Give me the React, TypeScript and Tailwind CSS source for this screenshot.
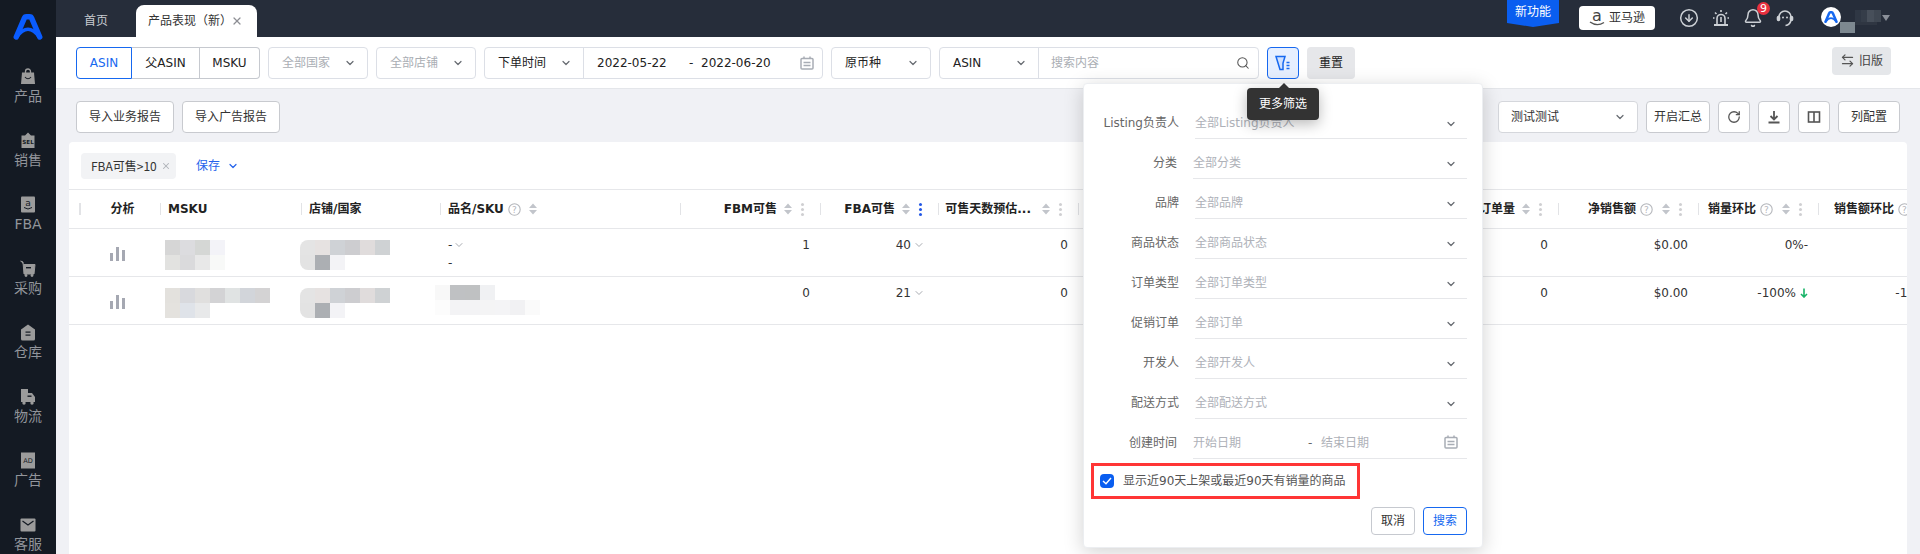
import React from "react";
import { ChevronDown, Search, X, ArrowLeftRight, RotateCw, CircleArrowDown, Bell } from "lucide-react";

const Logo = ({ size = 28, color = "#0a5cff" }: { size?: number; color?: string }) => (
  <svg width={size} height={size * 0.86} viewBox="0 0 28 24" fill="none">
    <path d="M3 21.5 L10.5 4 Q11 2.5 12.5 2.5 H15.5 Q17 2.5 17.5 4 L25 21.5" stroke={color} strokeWidth="5" strokeLinecap="round" strokeLinejoin="round" />
    <path d="M3.5 21.5 Q14 7 24.5 21.5" stroke={color} strokeWidth="3.2" strokeLinecap="round" />
  </svg>
);

const G = "#9b9b9b";
const D = "#141a23";
const SideIcons: Record<string, React.ReactNode> = {
  产品: (
    <svg width="16" height="17" viewBox="0 0 16 17">
      <path d="M5.5 5 V3.5 a2.5 2.5 0 0 1 5 0 V5" fill="none" stroke={G} strokeWidth="1.3" />
      <path d="M2 4.5 H14 L15 16 H1 Z" fill={G} />
      <path d="M5 9 Q8 12.5 11 9" fill="none" stroke={D} strokeWidth="1.1" />
    </svg>
  ),
  销售: (
    <svg width="16" height="17" viewBox="0 0 16 17">
      <path d="M8 0.5 L11 3.5 H14.5 V16 H1.5 V3.5 H5 Z" fill={G} />
      <text x="8" y="11.5" textAnchor="middle" fontSize="5.6" fontWeight="700" fill={D} fontFamily="DejaVu Sans">SEL</text>
    </svg>
  ),
  FBA: (
    <svg width="16" height="17" viewBox="0 0 16 17">
      <rect x="1" y="0.5" width="14" height="16" rx="1" fill={G} />
      <text x="8" y="10" textAnchor="middle" fontSize="9" fill={D} fontFamily="DejaVu Sans">a</text>
      <path d="M4 11.5 Q8 14.5 12 11.5" fill="none" stroke={D} strokeWidth="1" />
    </svg>
  ),
  采购: (
    <svg width="16" height="17" viewBox="0 0 16 17">
      <path d="M0.5 1 L3 2 L4 14 H14 L15 4.5 H3.5" fill={G} stroke={G} strokeWidth="1" />
      <rect x="6" y="7" width="5" height="1.4" fill={D} />
      <circle cx="6" cy="15.5" r="1.4" fill={G} />
      <circle cx="12" cy="15.5" r="1.4" fill={G} />
    </svg>
  ),
  仓库: (
    <svg width="16" height="17" viewBox="0 0 16 17">
      <path d="M8 0.5 L15 5.5 V15 Q15 16.5 13.5 16.5 H2.5 Q1 16.5 1 15 V5.5 Z" fill={G} />
      <rect x="5.5" y="7.5" width="5" height="1.2" fill={D} />
      <rect x="5.5" y="10.5" width="5" height="1.2" fill={D} />
    </svg>
  ),
  物流: (
    <svg width="16" height="17" viewBox="0 0 16 17">
      <path d="M1 1 H8 V5 H12 L15 9 V14 H1 Z" fill={G} />
      <rect x="7.5" y="7.5" width="4" height="1.4" fill={D} />
      <circle cx="4" cy="15" r="1.7" fill={G} />
      <circle cx="12" cy="15" r="1.7" fill={G} />
    </svg>
  ),
  广告: (
    <svg width="16" height="17" viewBox="0 0 16 17">
      <rect x="1" y="0.5" width="14" height="16" fill={G} />
      <text x="8" y="11" textAnchor="middle" fontSize="6.6" fill={D} fontFamily="DejaVu Sans">AD</text>
    </svg>
  ),
  客服: (
    <svg width="16" height="14" viewBox="0 0 16 14">
      <rect x="0.5" y="0.5" width="15" height="13" rx="1" fill={G} />
      <path d="M2.5 3 L8 7 L13.5 3" fill="none" stroke={D} strokeWidth="1.2" />
    </svg>
  ),
};

const Sidebar = () => (
  <div className="w-14 h-full shrink-0 bg-[#141a23] flex flex-col items-center text-sm text-[#92959b]">
    <div className="h-[68px] w-full flex justify-center pt-[14px] shrink-0">
      <Logo size={30} />
    </div>
    {["产品", "销售", "FBA", "采购", "仓库", "物流", "广告", "客服"].map((n) => (
      <div key={n} className="h-16 w-full shrink-0 flex flex-col items-center">
        <div className="h-[17px] flex items-center">{SideIcons[n]}</div>
        <div className="leading-5 mt-[1px]">{n}</div>
      </div>
    ))}
  </div>
);

const Mosaic = ({ rows }: { rows: string[][] }) => (
  <div className="flex flex-col">
    {rows.map((r, i) => (
      <div key={i} className="flex">
        {r.map((c, j) => (
          <div key={j} className={`w-[15px] h-[15px] ${c}`} />
        ))}
      </div>
    ))}
  </div>
);

const TopBar = () => (
  <div className="h-[37px] shrink-0 bg-[#262d3a] flex items-start text-xs">
    <div className="flex items-end h-[37px]">
      <div className="w-20 pl-7 h-[32px] flex items-center text-[#c9ccd1]">首页</div>
      <div className="w-[121px] h-[32px] bg-white rounded-t-lg flex items-center pl-3 text-[#333]">
        产品表现（新）
        <X size={12} strokeWidth={2.5} className="text-[#8d8f94] -ml-[1px]" />
      </div>
    </div>
    <div className="ml-auto flex items-start pr-[30px]">
      <div className="w-[52px] h-[27px] bg-[#0a5ef0] text-white flex items-center justify-center pb-[4px] [clip-path:polygon(0_0,100%_0,100%_85%,50%_100%,0_85%)]">
        新功能
      </div>
      <div className="ml-5 mt-[6px] w-[76px] h-6 bg-white rounded flex items-center justify-center gap-1 text-[#333]">
        <svg width="16" height="20" viewBox="0 0 16 20" fill="none">
          <text x="8" y="13" textAnchor="middle" fontSize="16" fill="#444" fontFamily="DejaVu Sans">a</text>
          <path d="M1 14 Q8 19 15 14.5" stroke="#555" strokeWidth="1.4" />
        </svg>
        亚马逊
      </div>
      <div className="ml-[18px] flex text-[#ccd0d5]">
        <div className="w-8 h-[36px] flex items-center justify-center">
          <CircleArrowDown size={20} strokeWidth={1.8} />
        </div>
        <div className="w-8 h-[36px] flex items-center justify-center">
          <svg width="18" height="18" viewBox="0 0 18 18" fill="none" stroke="currentColor" strokeWidth="1.6">
            <path d="M5 15.5 V9.5 a4 4 0 0 1 8 0 V15.5" />
            <path d="M2 16 H16" strokeWidth="2" />
            <path d="M9 1 V3 M3 3.5 L4.5 5 M15 3.5 L13.5 5 M1 9 H2.5 M17 9 H15.5 M9 8 V13" />
          </svg>
        </div>
        <div className="w-8 h-[36px] flex items-center justify-center relative">
          <Bell size={20} strokeWidth={1.8} />
          <div className="absolute left-[20px] top-[2px] w-[13px] h-[13px] rounded-full bg-[#e8303f] text-white text-[11px] leading-[13px] text-center">9</div>
        </div>
        <div className="w-8 h-[36px] flex items-center justify-center">
          <svg width="18" height="18" viewBox="0 0 18 18" fill="none" stroke="currentColor" strokeWidth="1.6">
            <path d="M3 10 V8 a6 6 0 0 1 12 0 V10" />
            <rect x="1.5" y="7.5" width="2" height="4" rx="1" fill="currentColor" />
            <rect x="14.5" y="7.5" width="2" height="4" rx="1" fill="currentColor" />
            <path d="M15 11 Q14 16 9.5 16.5" />
            <circle cx="7" cy="8.5" r="1" fill="currentColor" stroke="none" />
            <circle cx="11" cy="8.5" r="1" fill="currentColor" stroke="none" />
          </svg>
        </div>
      </div>
      <div className="ml-5 mt-[7px] w-5 h-5 rounded-full bg-white flex items-center justify-center shrink-0">
        <Logo size={14} color="#1668f0" />
      </div>
      <div className="mt-[10px] -ml-[6px] flex flex-col relative">
        <div className="flex pl-[20px]">
          <div className="w-[6px] h-3 bg-[#2f3744]" />
          <div className="w-[6px] h-3 bg-[#353d49]" />
          <div className="w-[7px] h-3 bg-[#474f5a]" />
          <div className="w-[7px] h-3 bg-[#3f4752]" />
        </div>
        <div className="flex">
          <div className="w-[5px] h-[11px] bg-transparent" />
          <div className="w-[15px] h-[11px] bg-[#7d8890]" />
          <div className="w-[22px] h-[3px] bg-[#2f3642]" />
        </div>
      </div>
      <div className="ml-[1px] mt-[15px] w-0 h-0 border-x-[4px] border-x-transparent border-t-[6px] border-t-[#8a8f98]" />
    </div>
  </div>
);

const Sel = ({ w, text, ph }: { w: string; text: string; ph?: boolean }) => (
  <div className={`${w} h-8 shrink-0 flex items-center justify-between pl-[13px] pr-[11px] bg-white border border-[#dcdfe6] rounded ${ph ? "text-[#aaaeb4]" : "text-[#222]"}`}>
    <span>{text}</span>
    <ChevronDown size={12} strokeWidth={2.4} className="text-[#666a70]" />
  </div>
);

const Calendar = () => (
  <svg width="14" height="14" viewBox="0 0 14 14" fill="none" stroke="#a8adb5" strokeWidth="1.5">
    <rect x="1" y="2.5" width="12" height="10.5" rx="1" />
    <path d="M4 0.5 V3 M10 0.5 V3 M3.5 6.5 H10.5 M3.5 9.5 H10.5" />
  </svg>
);

const FilterIcon = () => (
  <svg width="16" height="16" viewBox="0 0 16 16" fill="none" stroke="#1668f0" strokeWidth="1.5">
    <path d="M1 1.5 H10 L8 8 V14.5 H5 L3 8 Z" fill="#cfe0ff" />
    <path d="M11.5 7.5 H14.5 M11.5 10.5 H14.5 M11.5 13.5 H14.5" strokeWidth="1.6" />
  </svg>
);

const Toolbar = () => (
  <div className="h-[52px] shrink-0 bg-white border-b border-[#e4e6ea] flex items-center px-5 gap-2 text-xs text-[#222]">
    <div className="flex h-8 shrink-0">
      <div className="w-14 border border-[#1668f0] rounded-l flex items-center justify-center text-[#1668f0]">ASIN</div>
      <div className="w-[68px] border-y border-r border-[#c6c9cf] flex items-center justify-center">父ASIN</div>
      <div className="w-[60px] border-y border-r border-[#c6c9cf] rounded-r flex items-center justify-center">MSKU</div>
    </div>
    <Sel w="w-[100px]" text="全部国家" ph />
    <Sel w="w-[100px]" text="全部店铺" ph />
    <div className="flex h-8 w-[339px] shrink-0 border border-[#dcdfe6] rounded overflow-hidden">
      <div className="w-[99px] flex items-center justify-between pl-[13px] pr-[11px] border-r border-[#dcdfe6]">
        <span>下单时间</span>
        <ChevronDown size={12} strokeWidth={2.4} className="text-[#666a70]" />
      </div>
      <div className="flex-1 flex items-center pl-[13px] pr-2">
        <span className="w-[92px]">2022-05-22</span>
        <span className="w-3">-</span>
        <span>2022-06-20</span>
        <span className="ml-auto"><Calendar /></span>
      </div>
    </div>
    <Sel w="w-[100px]" text="原币种" />
    <div className="flex h-8 w-[320px] shrink-0 border border-[#dcdfe6] rounded overflow-hidden">
      <div className="w-[99px] flex items-center justify-between pl-[13px] pr-[11px] border-r border-[#dcdfe6]">
        <span>ASIN</span>
        <ChevronDown size={12} strokeWidth={2.4} className="text-[#666a70]" />
      </div>
      <div className="flex-1 flex items-center justify-between pl-3 pr-2 text-[#aaaeb4]">
        <span>搜索内容</span>
        <Search size={14} strokeWidth={1.8} className="text-[#555]" />
      </div>
    </div>
    <div className="w-8 h-8 shrink-0 rounded border border-[#1668f0] bg-[#e6efff] flex items-center justify-center">
      <FilterIcon />
    </div>
    <div className="w-12 h-8 shrink-0 rounded bg-[#e6e7ea] flex items-center justify-center">重置</div>
    <div className="ml-auto mr-[9px] -mt-1 w-[59px] h-7 shrink-0 rounded bg-[#e5e7ea] flex items-center justify-center gap-1 text-[#444]">
      <ArrowLeftRight size={15} strokeWidth={2} className="text-[#555]" />
      旧版
    </div>
  </div>
);

const Btn = ({ w, children }: { w: string; children: React.ReactNode }) => (
  <div className={`${w} h-8 shrink-0 rounded border border-[#c8cacf] bg-white flex items-center justify-center text-[#333]`}>{children}</div>
);

const ActionRow = () => (
  <div className="flex items-center px-5 pt-3 text-xs">
    <div className="flex gap-2">
      <Btn w="w-[98px]">导入业务报告</Btn>
      <Btn w="w-[98px]">导入广告报告</Btn>
    </div>
    <div className="ml-auto flex gap-2">
      <div className="w-[140px] h-8 rounded border border-[#d5d7dc] bg-white flex items-center justify-between pl-3 pr-[11px] text-[#333]">
        <span>测试测试</span>
        <ChevronDown size={12} strokeWidth={2.4} className="text-[#666a70]" />
      </div>
      <Btn w="w-16">开启汇总</Btn>
      <Btn w="w-8"><RotateCw size={14} strokeWidth={2.2} className="text-[#555]" /></Btn>
      <Btn w="w-8">
        <svg width="14" height="14" viewBox="0 0 14 14" fill="none" stroke="#555" strokeWidth="1.8">
          <path d="M7 1 V9 M3.5 6 L7 9.5 L10.5 6" />
          <path d="M1.5 12.5 H12.5" strokeWidth="2" />
        </svg>
      </Btn>
      <Btn w="w-8">
        <svg width="14" height="14" viewBox="0 0 14 14" fill="none" stroke="#555" strokeWidth="1.6">
          <rect x="1.5" y="2" width="11" height="10" />
          <path d="M7 2 V12" />
        </svg>
      </Btn>
      <Btn w="w-[62px]">列配置</Btn>
    </div>
  </div>
);

const Sort = () => (
  <svg width="8" height="12" viewBox="0 0 8 12" className="shrink-0">
    <path d="M4 0.5 L8 5 H0 Z M4 11.5 L8 7 H0 Z" fill="#c2c5cb" />
  </svg>
);

const Dots = ({ blue }: { blue?: boolean }) => (
  <div className={`w-1 flex flex-col gap-[2px] shrink-0 ${blue ? "text-[#2458e6]" : "text-[#cfcfd2]"}`}>
    {[0, 1, 2].map((i) => (
      <div key={i} className="w-[3px] h-[3px] rounded-full bg-current mx-auto" />
    ))}
  </div>
);

const Help = () => (
  <svg width="13" height="13" viewBox="0 0 13 13" fill="none" className="shrink-0" stroke="#b5b7bc">
    <circle cx="6.5" cy="6.5" r="5.7" strokeWidth="1.1" />
    <text x="6.5" y="9.7" textAnchor="middle" fontSize="9" fill="#b5b7bc" stroke="none" fontWeight="400" fontFamily="DejaVu Sans">?</text>
  </svg>
);

const GRID = "grid grid-cols-[11px_80px_141px_139px_240px_140px_118px_140px_480px_140px_120px_138px] w-[1976px]";

const HCell = ({ children, right, center, pl }: { children: React.ReactNode; right?: boolean; center?: boolean; pl?: boolean }) => (
  <div className="flex items-center">
    <div className={`h-3 w-full border-l border-[#e2e3e6] flex items-center whitespace-nowrap ${right ? "justify-end pr-4" : ""} ${center ? "justify-center pl-1" : ""} ${pl ? "pl-[7px]" : ""}`}>
      {children}
    </div>
  </div>
);

const SortDots = ({ blue, help }: { blue?: boolean; help?: boolean }) => (
  <>
    {help && <span className="ml-1"><Help /></span>}
    <span className={`${help ? "ml-[9px]" : "ml-[7px]"} flex`}><Sort /></span>
    <span className="ml-2 flex"><Dots blue={blue} /></span>
  </>
);

const Bars = () => (
  <svg width="15" height="14" viewBox="0 0 15 14" fill="#a5a8b2">
    <rect x="0" y="6" width="3" height="8" />
    <rect x="6" y="0" width="3" height="14" />
    <rect x="12" y="3" width="3" height="11" />
  </svg>
);

const Store = () => (
  <div className="-ml-[1px] rounded-l-lg overflow-hidden w-fit">
    <Mosaic
      rows={[
        ["bg-[#e4e4e4]", "bg-[#e6e2e1]", "bg-[#cfd2d6]", "bg-[#cdcdd0]", "bg-[#e0dcdc]", "bg-[#cfd2d4]"],
        ["bg-[#e3e3e3]", "bg-[#acafb3]", "bg-[#f3f3f6]"],
      ]}
    />
  </div>
);

const Num = ({ children, pr = "pr-[10px]" }: { children?: React.ReactNode; pr?: string }) => (
  <div className={`flex justify-end items-center h-4 mt-2 whitespace-nowrap ${pr}`}>{children}</div>
);

const DownArrow = () => (
  <svg width="8" height="10" viewBox="0 0 8 10" fill="none" stroke="#18b368" strokeWidth="1.6" className="ml-[4px]">
    <path d="M4 0.5 V9 M1 6 L4 9 L7 6" />
  </svg>
);

const Row = ({ msku, name, fbm, fba, pct, last }: { msku: React.ReactNode; name: React.ReactNode; fbm: string; fba: string; pct: React.ReactNode; last?: React.ReactNode }) => (
  <div className={`${GRID} h-12 border-b border-[#e6e7ea] text-[#333] text-xs`}>
    <div />
    <div className="pl-[30px] pt-[18px]"><Bars /></div>
    <div className="pl-[5px] pt-[11px]">{msku}</div>
    <div className="pt-[11px]"><Store /></div>
    <div>{name}</div>
    <Num>{fbm}</Num>
    <Num pr="pr-[13px]">
      {fba}
      <ChevronDown size={12} strokeWidth={2} className="text-[#a8abb1] ml-[2px]" />
    </Num>
    <Num>0</Num>
    <Num>0</Num>
    <Num>$0.00</Num>
    <Num>{pct}</Num>
    <Num>{last}</Num>
  </div>
);

const Card = () => (
  <div className="mx-[13px] mt-[9px] flex-1 bg-white rounded-t overflow-hidden text-xs">
    <div className="h-12 border-b border-[#e6e7ea] flex items-center pl-3">
      <div className="w-[95px] h-[26px] bg-[#f2f3f5] rounded-sm flex items-center pl-[10px] text-[#333] whitespace-nowrap [font-family:'Noto_Sans_CJK_SC',sans-serif]">
        FBA可售&gt;10
        <X size={10} strokeWidth={2.5} className="text-[#b0b3b9] ml-[4px]" />
      </div>
      <div className="ml-5 text-[#2563eb] flex items-center gap-[7px]">
        保存
        <ChevronDown size={12} strokeWidth={2.4} />
      </div>
    </div>
    <div className={`${GRID} h-[39px] border-b border-[#e6e7ea] font-bold text-[#222]`}>
      <div className="flex items-center justify-end"><div className="h-3 border-r border-[#e2e3e6]" /></div>
      <HCell center>分析</HCell>
      <HCell pl>MSKU</HCell>
      <HCell pl>店铺/国家</HCell>
      <HCell pl>品名/SKU<span className="ml-1"><Help /></span><span className="ml-2 flex"><Sort /></span></HCell>
      <HCell right>FBM可售<SortDots /></HCell>
      <HCell right>FBA可售<SortDots blue /></HCell>
      <HCell right><span className="mr-1">可售天数预估...</span><SortDots /></HCell>
      <HCell right>订单量<SortDots /></HCell>
      <HCell right>净销售额<SortDots help /></HCell>
      <HCell right>销量环比<SortDots help /></HCell>
      <HCell right>销售额环比<SortDots help /></HCell>
    </div>
    <Row
      msku={<Mosaic rows={[["bg-[#d6d6d6]", "bg-[#dcdcdf]", "bg-[#d5d7d5]", "bg-[#f3f3f8]"], ["bg-[#e2e2e0]", "bg-[#dadadc]", "bg-[#e8e8e8]", "bg-[#f8f9f8]"]]} />}
      name={
        <div className="pl-2">
          <div className="h-4 mt-2 flex items-center">- <ChevronDown size={12} strokeWidth={2} className="text-[#a8abb1] ml-[1px]" /></div>
          <div className="mt-[2px] leading-4">-</div>
        </div>
      }
      fbm="1"
      fba="40"
      pct="0%-"
    />
    <Row
      msku={<Mosaic rows={[["bg-[#e3e1dd]", "bg-[#d8d9dd]", "bg-[#e0dfde]", "bg-[#d3d3d5]", "bg-[#e0e3e3]", "bg-[#d2d5da]", "bg-[#d4d3d4]"], ["bg-[#e4e2de]", "bg-[#dfe3e9]", "bg-[#e8e9ea]"]]} />}
      name={
        <div className="-ml-[5px] pt-[8px]">
          <Mosaic rows={[["bg-[#f8f8f8]", "bg-[#bfc1c3]", "bg-[#bfc1c2]", "bg-[#f0f1f3]"], ["bg-[#fcfcfc]", "bg-[#f3f3f5]", "bg-[#f3f3f5]", "bg-[#f4f4f5]", "bg-[#f4f4f6]", "bg-[#f1f1f3]", "bg-[#fafafa]"]]} />
        </div>
      }
      fbm="0"
      fba="21"
      pct={<>-100%<DownArrow /></>}
      last={<>-100%<DownArrow /></>}
    />
  </div>
);

const FRow = ({ label, ph, tight }: { label: string; ph: string; tight?: boolean }) => (
  <div className="flex h-10">
    <div className={`${tight ? "w-[93px]" : "w-[95px]"} text-right pt-4 leading-4 text-[#666] shrink-0`}>{label}</div>
    <div className="ml-4 flex-1 border-b border-[#e6e7ea] flex justify-between pt-4 pr-[10px] text-[#aeb1b8]">
      <span className="leading-4">{ph}</span>
      <ChevronDown size={12} strokeWidth={2.4} className="text-[#666a70] mt-[3px]" />
    </div>
  </div>
);

const FilterPanel = () => (
  <div className="absolute left-[1083px] top-[83px] w-[400px] h-[465px] bg-white rounded border border-[#eceef1] shadow-[0_4px_20px_rgba(0,0,0,0.18)] text-xs pt-[15px] pr-[15px]">
    <FRow label="Listing负责人" ph="全部Listing负责人" />
    <FRow label="分类" ph="全部分类" tight />
    <FRow label="品牌" ph="全部品牌" />
    <FRow label="商品状态" ph="全部商品状态" />
    <FRow label="订单类型" ph="全部订单类型" />
    <FRow label="促销订单" ph="全部订单" />
    <FRow label="开发人" ph="全部开发人" />
    <FRow label="配送方式" ph="全部配送方式" />
    <div className="flex h-10">
      <div className="w-[93px] text-right pt-4 leading-4 text-[#666] shrink-0">创建时间</div>
      <div className="ml-4 flex-1 border-b border-[#e6e7ea] flex pt-4 pr-[9px] leading-4 text-[#aeb1b8]">
        <span className="w-[115px]">开始日期</span>
        <span className="w-[13px] text-[#666]">-</span>
        <span>结束日期</span>
        <span className="ml-auto"><Calendar /></span>
      </div>
    </div>
    <div className="ml-[7px] mt-1 w-[269px] h-9 border-[3px] border-[#ff3535] flex items-center pl-[6px] text-[#555]">
      <div className="w-[14px] h-[14px] rounded-sm bg-[#0a5ef0] flex items-center justify-center shrink-0">
        <svg width="10" height="8" viewBox="0 0 10 8" fill="none" stroke="white" strokeWidth="1.4"><path d="M1 4 L4 6.8 L9 1" /></svg>
      </div>
      <span className="ml-[9px] whitespace-nowrap">显示近90天上架或最近90天有销量的商品</span>
    </div>
    <div className="flex justify-end gap-2 mt-2">
      <div className="w-11 h-7 rounded border border-[#c6c9cf] flex items-center justify-center text-[#333]">取消</div>
      <div className="w-11 h-7 rounded border border-[#1668f0] flex items-center justify-center text-[#1668f0]">搜索</div>
    </div>
  </div>
);

const Tooltip = () => (
  <div className="absolute left-[1247px] top-[88px] w-[72px] h-8 rounded bg-[#333] text-white text-xs flex items-center justify-center shadow-[0_4px_14px_rgba(0,0,0,0.28)]">
    <div className="absolute -top-[5px] left-[32px] w-0 h-0 border-x-[5px] border-x-transparent border-b-[5px] border-b-[#333]" />
    更多筛选
  </div>
);

export default function App() {
  return (
    <div className="relative w-[1920px] h-[554px] overflow-hidden flex bg-[#f0f1f5] [font-family:'DejaVu_Sans','Noto_Sans_CJK_SC',sans-serif]">
      <Sidebar />
      <div className="flex-1 min-w-0 h-full flex flex-col">
        <TopBar />
        <Toolbar />
        <ActionRow />
        <Card />
      </div>
      <FilterPanel />
      <Tooltip />
    </div>
  );
}
